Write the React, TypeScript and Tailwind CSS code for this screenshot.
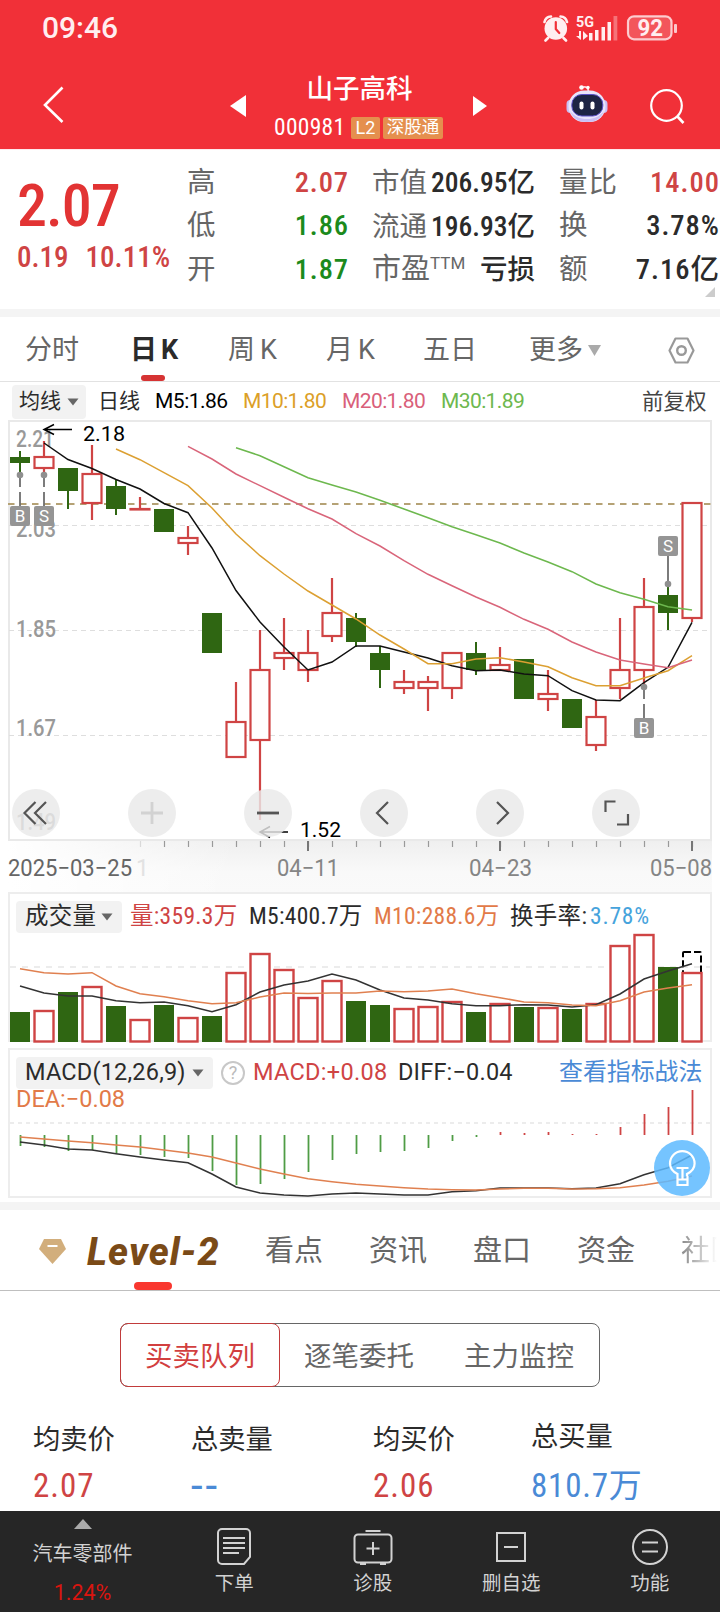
import type { ReactNode } from "react";
import clsx from "clsx";

const RED = "#cf4444";
const GREEN = "#2f6612";

// Horizontal position of the nth trading day
const cx = (i: number) => 20 + i * 24;

type Candle = { up: boolean; top: number; bottom: number; high: number; low: number };

const c = (up: boolean, top: number, bottom: number, high = top, low = bottom): Candle => ({
  up,
  top,
  bottom,
  high,
  low,
});

const candles: Candle[] = [
  c(false, 457, 463, 451, 474),
  c(true, 457, 468, 441, 474),
  c(false, 468, 491, 468, 509),
  c(true, 474, 503, 445, 520),
  c(false, 486, 509, 480, 515),
  c(true, 509, 509, 497, 509),
  c(false, 509, 532),
  c(true, 538, 543, 526, 555),
  c(false, 613, 653),
  c(true, 722, 757, 682, 757),
  c(true, 670, 740, 630, 820),
  c(true, 653, 658, 618, 670),
  c(true, 653, 670, 630, 682),
  c(true, 613, 636, 578, 642),
  c(false, 618, 642, 613, 647),
  c(false, 653, 670, 646, 688),
  c(true, 682, 688, 670, 694),
  c(true, 682, 688, 676, 711),
  c(true, 653, 688, 653, 699),
  c(false, 653, 670, 642, 675),
  c(true, 665, 670, 647, 670),
  c(false, 659, 699),
  c(true, 694, 699, 670, 711),
  c(false, 699, 728),
  c(true, 717, 745, 700, 751),
  c(true, 670, 688, 618, 699),
  c(true, 607, 670, 578, 688),
  c(false, 595, 613, 585, 630),
  c(true, 503, 618, 503, 622),
];

const ma5 = [443, 459.5, 468.5, 479.5, 489, 503.5, 512.7, 548, 590.5, 622, 647, 670, 662, 646, 646, 652, 658, 665.7, 670.7, 670, 674, 675.7, 690.7, 700, 700.7, 682.7, 667.3, 622.3];
const ma10 = [449, 459.7, 472.7, 485.7, 508, 534, 555.7, 574, 591, 605, 619, 635, 649, 663.7, 663.7, 659, 657.7, 662, 666.7, 677.7, 685.7, 685.7, 678, 670.7, 655.7];
const ma20 = [446.3, 459, 474, 485.7, 497.3, 508.7, 519, 533.7, 546, 560.7, 574.3, 585.7, 597, 607.3, 619.3, 629.3, 642, 652, 660, 664, 667.7, 660];
const ma30 = [447.7, 455.7, 466.7, 477.7, 485, 492, 500.3, 509, 517.7, 526.7, 534.7, 543, 553, 562, 571.7, 584, 592.7, 599.3, 606.7, 610];

const volumes = [1012, 1010, 992, 986, 1006, 1019, 1005, 1017, 1016, 972, 953, 969, 997, 980, 1001, 1005, 1008, 1006, 1001, 1012, 1003, 1007, 1007, 1009, 1003, 945, 934, 967, 972];
const vol5 = [986, 993, 996, 996, 1000.7, 1002.7, 1002, 1005.7, 1011.7, 1004.7, 992, 985, 981, 974, 980, 990, 998, 1000, 1003.7, 1005.7, 1005.7, 1004.7, 1005, 1007, 1004.7, 994, 979, 971, 963.7];
const vol10 = [968.7, 972.7, 974, 972.7, 986, 993.7, 996.7, 1000.7, 1003.7, 1002.7, 997, 993, 993.5, 993, 993, 991, 991.7, 991, 989, 993.7, 997.7, 1002, 1002.7, 1005, 1005.7, 1000.7, 992, 988, 984.7];

const macd = [1146, 1147, 1151, 1150, 1153, 1155, 1157, 1158, 1171, 1185, 1184, 1179, 1172, 1160, 1154, 1152, 1151, 1148, 1141, 1137, 1132, 1133, 1132, 1134, 1134, 1127, 1114, 1107, 1090];
const diff = [1142, 1145, 1149, 1150, 1153.7, 1157, 1160, 1162.7, 1174, 1187, 1193, 1195, 1196, 1194, 1193, 1194, 1195, 1195, 1191.7, 1190.7, 1188, 1188, 1188, 1188.7, 1188, 1183.7, 1174.7, 1167.7, 1155];
const dea = [1137, 1139, 1141, 1142.7, 1145, 1147, 1150, 1153, 1157, 1163, 1169, 1174, 1178.7, 1181.7, 1184.3, 1186, 1187.7, 1189, 1189.7, 1190, 1189, 1188.3, 1188.3, 1189, 1188.7, 1187.7, 1185, 1181.3, 1176];

function Line({ data, from = 0, color }: { data: number[]; from?: number; color: string }) {
  const points = data.map((y, i) => `${cx(i + from)},${y}`).join(" ");
  return <polyline points={points} fill="none" stroke={color} strokeWidth="1.500" />;
}

type LabelProps = { x: number; y: number; w: number; size?: number; fill?: string; weight?: number; children: string };

function Label({ x, y, w, size = 21, fill = "#000", weight = 400, children }: LabelProps) {
  return (
    <text x={x} y={y} fontSize={size} fontWeight={weight} fill={fill} textLength={w} lengthAdjust="spacingAndGlyphs">
      {children}
    </text>
  );
}

function Caret() {
  return (
    <svg width="12" height="8" viewBox="0 0 12 8" className="shrink-0 text-[#666]">
      <path d="M0.500 0.500h11L6 7.500z" fill="currentColor" />
    </svg>
  );
}

function Tag({ x, y, children }: { x: number; y: number; children: string }) {
  return (
    <g>
      <rect x={x - 10} y={y} width="20" height="20" rx="2" fill="#959595" />
      <text x={x} y={y + 16} fontSize="17" fill="#fff" textAnchor="middle">
        {children}
      </text>
    </g>
  );
}

function StatusBar() {
  return (
    <div className="flex h-[55px] items-center pl-[42px] pr-[41px] text-[#ffeef0]">
      <span className="text-[30px] font-medium leading-none">09:46</span>
      <svg className="ml-auto" width="136" height="28" viewBox="0 0 136 28">
        <g fill="none" stroke="currentColor" strokeWidth="2.600" strokeLinecap="round">
          <path d="M1.500 8A7 7 0 0 1 8 2.500M24 8A7 7 0 0 0 17.500 2.500M5 24l-2.500 2.500M20.500 24l2.500 2.500" />
        </g>
        <circle cx="12.800" cy="14.500" r="11.300" fill="currentColor" />
        <path d="M12.800 8v7l3.500 4" fill="none" stroke="#f13038" strokeWidth="2.200" strokeLinecap="round" />
        <text x="33" y="13" fontSize="15" fontWeight="700" fill="currentColor" textLength="18" lengthAdjust="spacingAndGlyphs">
          5G
        </text>
        <path d="M38 17v9l-5-4h3v-5zM40 17l5 5-5 4z" fill="currentColor" />
        <path d="M46 19h3.500v7.500H46zM52 16h3.500v10.500H52zM58.500 13H62v13.500h-3.500zM64.500 8H68v18.500h-3.500z" fill="currentColor" />
        <path d="M70.500 2h3.800v24.500h-3.800z" fill="currentColor" opacity=".35" />
        <rect x="85" y="2.300" width="43.500" height="23" rx="6" fill="#fff" fillOpacity=".18" stroke="currentColor" strokeWidth="2.200" strokeOpacity=".8" />
        <rect x="131" y="10" width="3" height="9" rx="1" fill="currentColor" opacity=".8" />
        <text x="94.500" y="22" fontSize="23" fontWeight="700" fill="currentColor" textLength="25.500" lengthAdjust="spacingAndGlyphs">
          92
        </text>
      </svg>
    </div>
  );
}

function Robot() {
  return (
    <svg width="42" height="40" viewBox="0 0 42 40">
      <path d="M16 3.500c4-1.500 6.500 0 6.500 5" fill="none" stroke="#ffd5dc" strokeWidth="1.800" />
      <circle cx="15.500" cy="3.500" r="2.300" fill="#fff" />
      <circle cx="22" cy="3.500" r="1.700" fill="#fff" />
      <rect x="0.500" y="16" width="8" height="13" rx="4" fill="#c9c0f5" />
      <rect x="33.500" y="16" width="8" height="13" rx="4" fill="#c9c0f5" />
      <rect x="2.500" y="6.500" width="37" height="31.500" rx="15.500" fill="#e9e4fb" />
      <path d="M4 27c3 8 9 11 17 11s14-3 17-11c-5 6-10 8-17 8S9 33 4 27z" fill="#c9c0f5" />
      <rect x="5.800" y="10.500" width="31" height="21.500" rx="10" fill="#1d2444" stroke="#5a50c8" />
      <rect x="13.500" y="17.500" width="4" height="8" rx="2" fill="#fff" />
      <rect x="24.500" y="17.500" width="4" height="8" rx="2" fill="#fff" />
    </svg>
  );
}

function Header() {
  return (
    <header className="h-[149px] bg-[#f13038] text-white">
      <StatusBar />
      <div className="flex h-[94px] items-center">
        <svg className="ml-[42px] mt-[2px]" width="24" height="40" viewBox="0 0 24 40">
          <path d="M20.500 4.500L3 22l17.500 17" fill="none" stroke="#fff" strokeWidth="2.600" />
        </svg>
        <svg className="ml-[164px] mt-2" width="17" height="22" viewBox="0 0 17 22">
          <path d="M16 0v22L0 11z" fill="#fff" />
        </svg>
        <div className="ml-[26px] flex w-[173px] flex-col items-center pt-[9px]">
          <h1 className="text-[26.500px] font-medium leading-[32px]">山子高科</h1>
          <div className="mt-[11px] flex h-[24px] w-full items-center gap-[3px]">
            <span className="w-[75px] pl-px text-[23.500px] font-stretch-75% leading-none tracking-[0.300px]">000981</span>
            <span className="flex h-[22px] w-[29px] items-center justify-center rounded-[2px] bg-[#e58f4e] text-[18px] leading-none">L2</span>
            <span className="flex h-[22px] w-[60px] items-center justify-center rounded-[2px] bg-[#e58f4e] text-[17.500px] leading-none">深股通</span>
          </div>
        </div>
        <svg className="ml-[27px] mt-2" width="14" height="20" viewBox="0 0 14 20">
          <path d="M0 0v20l14-10z" fill="#fff" />
        </svg>
        <div className="ml-[79px] mt-[4px]">
          <Robot />
        </div>
        <svg className="ml-[42px] mt-[9px]" width="35" height="35" viewBox="0 0 35 35">
          <circle cx="16.500" cy="16.500" r="15.300" fill="none" stroke="#fff" strokeWidth="2.200" />
          <path d="M27 27l6.500 7" stroke="#fff" strokeWidth="2.600" />
        </svg>
      </div>
    </header>
  );
}

function Stat({ label, value, tone = "text-[#2b2b2b]" }: { label: ReactNode; value: string; tone?: string }) {
  return (
    <div className="flex h-[43.500px] items-center justify-between whitespace-nowrap">
      <span className="leading-none text-[#666]">{label}</span>
      <span className={clsx("font-medium leading-none", tone)}>{value}</span>
    </div>
  );
}

function Quote() {
  return (
    <section className="relative flex h-[160px] items-start border-t border-[#ffe9ec] pt-[11px] font-stretch-75%">
      <div className="w-[187px] pl-[17px] pt-[14px]">
        <div className="text-[60px] font-medium leading-[62px] tracking-[-1px] text-[#e23333]">2.07</div>
        <div className="mt-[4px] flex gap-[17px] text-[29px] font-medium leading-[32px] text-[#cf4444]">
          <span>0.19</span>
          <span>10.11%</span>
        </div>
      </div>
      <div className="w-[162px] text-[28.500px] tracking-[0.900px]">
        <Stat label="高" value="2.07" tone="text-[#cf4444]" />
        <Stat label="低" value="1.86" tone="text-[#1c8a1c]" />
        <Stat label="开" value="1.87" tone="text-[#1c8a1c]" />
      </div>
      <div className="ml-[23px] w-[163px] text-[27.500px]">
        <Stat label="市值" value="206.95亿" />
        <Stat label="流通" value="196.93亿" />
        <Stat
          label={
            <span className="text-[29px]">
              市盈<sup className="top-[-10px] text-[17px] font-stretch-100%">TTM</sup>
            </span>
          }
          value="亏损"
        />
      </div>
      <div className="ml-[24px] w-[161px] text-[28.500px] tracking-[1px]">
        <Stat label="量比" value="14.00" tone="text-[#cf4444]" />
        <Stat label="换" value="3.78%" />
        <Stat label="额" value="7.16亿" />
      </div>
      <svg className="absolute bottom-[12px] right-[5px]" width="10" height="10" viewBox="0 0 10 10">
        <path d="M10 0v10H0z" fill="#ccc" />
      </svg>
    </section>
  );
}

function PeriodTabs() {
  return (
    <nav className="flex h-[65px] items-center border-b border-[#e2e2e2] pl-[25px] pt-[3px] text-[27px] text-[#666]">
      <span className="w-[105px]">分时</span>
      <span className="relative flex h-full w-[98px] items-center gap-[4px] font-bold text-[#2b2b2b]">
        日<span>K</span>
        <i className="absolute bottom-0 left-[11px] h-[6px] w-[24px] rounded-full bg-[#d63333]" />
      </span>
      <span className="flex w-[98px] gap-[5px]">
        周<span>K</span>
      </span>
      <span className="flex w-[97px] gap-[5px]">
        月<span>K</span>
      </span>
      <span className="w-[106px]">五日</span>
      <span className="flex w-[139px] items-center gap-[5px]">
        更多
        <svg width="13" height="11" viewBox="0 0 13 11">
          <path d="M0 0h13L6.500 11z" fill="#aaa" />
        </svg>
      </span>
      <svg width="27" height="27" viewBox="0 0 27 27">
        <path d="M7.500 1.500h12l6 12-6 12h-12l-6-12z" fill="none" stroke="#999" strokeWidth="2.200" strokeLinejoin="round" />
        <circle cx="13.500" cy="13.500" r="4.300" fill="none" stroke="#999" strokeWidth="2.400" />
      </svg>
    </nav>
  );
}

function Legend() {
  return (
    <div className="flex h-[38px] items-center whitespace-nowrap pt-px text-[21px] leading-none">
      <span className="ml-[12px] flex h-[34px] w-[74px] items-center gap-[6px] rounded-[4px] bg-[#f2f2f2] pl-[7px] text-[#2b2b2b]">
        均线
        <Caret />
      </span>
      <span className="ml-[12px] w-[57px] text-[#2b2b2b]">日线</span>
      <span className="w-[88px] tracking-[-0.500px] text-black">M5:1.86</span>
      <span className="w-[99px] tracking-[-0.600px] text-[#dc9f28]">M10:1.80</span>
      <span className="w-[99px] tracking-[-0.600px] text-[#d9607a]">M20:1.80</span>
      <span className="w-[201px] tracking-[-0.600px] text-[#6db84e]">M30:1.89</span>
      <span className="text-[21.500px] text-[#444]">前复权</span>
    </div>
  );
}

function KChart() {
  return (
    <svg width="720" height="472" viewBox="0 420 720 472" className="block">
      <defs>
        <linearGradient id="axis" x1="0" y1="0" x2="0" y2="1">
          <stop offset="0" stopColor="#efefef" />
          <stop offset=".6" stopColor="#f9f9f9" />
          <stop offset="1" stopColor="#fafafa" />
        </linearGradient>
        <linearGradient id="fade" x1="0" y1="0" x2="1" y2="0">
          <stop offset="0" stopColor="#fff" />
          <stop offset="1" stopColor="#fff" stopOpacity="0" />
        </linearGradient>
      </defs>
      <rect x="8" y="841" width="704" height="51" fill="url(#axis)" />
      <rect x="8" y="841" width="230" height="51" fill="url(#fade)" />
      <rect x="9" y="421" width="702" height="419" fill="none" stroke="#e9e9e9" strokeWidth="2" />
      <g stroke="#dedede" strokeWidth="1.200" strokeDasharray="5 4">
        <path d="M9 525.500H711M9 630.500H711M9 735.500H711" />
      </g>
      <path d="M8 504H711" stroke="#b5a275" strokeWidth="1.800" strokeDasharray="6.500 5.500" />

      <Label x={16} y={447} w={38} size={23} weight={500} fill="#999">2.21</Label>
      <Label x={16} y={537} w={40} size={23} weight={500} fill="#999">2.03</Label>
      <Label x={16} y={637} w={40} size={23} weight={500} fill="#999">1.85</Label>
      <Label x={16} y={736} w={40} size={23} weight={500} fill="#999">1.67</Label>
      <Label x={16} y={830} w={40} size={23} weight={500} fill="#999">1.49</Label>

      {candles.map(({ up, top, bottom, high, low }, i) =>
        up ? (
          <g key={i} stroke={RED} strokeWidth="2.200">
            <path d={`M${cx(i)} ${high}V${top}M${cx(i)} ${bottom}V${low}`} />
            <rect x={cx(i) - 9.5} y={top} width="19" height={Math.max(bottom - top, 0.5)} fill="#fff" />
          </g>
        ) : (
          <g key={i} fill={GREEN}>
            <rect x={cx(i) - 1} y={high} width="2" height={low - high} />
            <rect x={cx(i) - 10} y={top} width="20" height={bottom - top} />
          </g>
        )
      )}

      <Line data={ma5} from={1} color="#111" />
      <Line data={ma10} from={4} color="#dca032" />
      <Line data={ma20} from={7} color="#d9657a" />
      <Line data={ma30} from={9} color="#6db84e" />

      {/* trade markers */}
      <g stroke="#6e6e6e" strokeWidth="1.800">
        <path d="M20 475v12M20 492v14M44 475v12M44 492v14M668 556v28M644 689v10M644 704v14" />
      </g>
      <g fill="#8f8f8f">
        <circle cx="20" cy="475" r="3.300" />
        <circle cx="44" cy="475" r="3.300" />
        <circle cx="668" cy="584" r="3.300" />
        <circle cx="644" cy="687" r="3.300" />
      </g>
      <Tag x={20} y={506}>B</Tag>
      <Tag x={44} y={506}>S</Tag>
      <Tag x={668} y={536}>S</Tag>
      <Tag x={644} y={718}>B</Tag>

      <path d="M72 429.500H45M54 424.500l-10 5 10 5" fill="none" stroke="#000" strokeWidth="1.500" />
      <Label x={83} y={441} w={42}>2.18</Label>
      <path d="M288 832H261M270 826.500l-10 5.500 10 5.500" fill="none" stroke="#000" strokeWidth="1.500" />
      <Label x={300} y={837} w={41}>1.52</Label>

      {/* floating chart controls */}
      <g fill="#e9e9e9" fillOpacity=".82">
        {[36, 152, 268, 384, 500, 616].map((x) => (
          <circle key={x} cx={x} cy="813" r="24" />
        ))}
      </g>
      <g fill="none" stroke="#555" strokeWidth="2.200">
        <path d="M35.500 802l-11 11 11 11M46 802l-11 11 11 11" />
        <path d="M152 802v22M141 813h22" stroke="#d2d2d2" strokeWidth="2.800" />
        <path d="M257 813h22" strokeWidth="2.800" />
        <path d="M388 802l-11 11 11 11M497 802l11 11-11 11" />
        <path d="M605.500 812v-10.500h10M628 814v10.500h-11" />
      </g>

      {/* date axis */}
      <g stroke="#999" strokeWidth="1.200">
        {candles.map((_, i) => (i > 4 ? <path key={i} d={`M${cx(i) + 0.5} 841v6`} opacity={i === 5 ? 0.3 : 1} /> : null))}
      </g>
      <path d="M308 841v10M500 841v10M692 841v10" stroke="#777" strokeWidth="2" />
      <Label x={8} y={876} w={124} size={23.5} fill="#666">2025−03−25</Label>
      <text x="136" y="876" fontSize="23" fill="#e2e2e2">1</text>
      <Label x={277} y={876} w={62} size={23.5} fill="#858585">04−11</Label>
      <Label x={469} y={876} w={63} size={23.5} fill="#858585">04−23</Label>
      <Label x={650} y={876} w={62} size={23.5} fill="#858585">05−08</Label>
    </svg>
  );
}

function Volume() {
  return (
    <section className="mx-2 h-[150px] border-x-2 border-t-2 border-[#ededed]">
      <div className="flex h-[45px] items-center whitespace-nowrap pl-[6px] pt-px text-[23.500px] leading-none tracking-[0.300px] font-stretch-75%">
        <span className="flex h-[32px] w-[106px] items-center gap-[5px] rounded-[4px] bg-[#f2f2f2] pl-[9px] text-[#2b2b2b]">
          成交量
          <Caret />
        </span>
        <span className="ml-[8px] w-[119px] text-[#cf4444]">量:359.3万</span>
        <span className="w-[125px] text-[#2b2b2b]">M5:400.7万</span>
        <span className="w-[136px] text-[#e27a48]">M10:288.6万</span>
        <span className="w-[80px] text-[#2b2b2b]">换手率:</span>
        <span className="tracking-[0.800px] text-[#46a3dc]">3.78%</span>
      </div>
      <svg width="700" height="103" viewBox="10 939 700 103" className="block overflow-visible">
        <path d="M10 967H710" stroke="#e6e6e6" strokeWidth="1.500" strokeDasharray="6 6" />
        <path d="M8 1041H712" stroke="#ededed" strokeWidth="2" />
        <rect x="683" y="952" width="18" height="26" rx="1" fill="none" stroke="#000" strokeWidth="2" strokeDasharray="7 3" />
        {volumes.map((y, i) =>
          candles[i].up ? (
            <rect key={i} x={cx(i) - 9.5} y={y + 1} width="19" height={1040.5 - y} fill="#fff" stroke={RED} strokeWidth="2.400" />
          ) : (
            <rect key={i} x={cx(i) - 10} y={y} width="20" height={1042 - y} fill={GREEN} />
          )
        )}
        <Line data={vol5} color="#333" />
        <Line data={vol10} color="#e08050" />
      </svg>
    </section>
  );
}

function Macd() {
  return (
    <section className="relative mx-2 mt-[6px] h-[150px] border-2 border-[#ededed]">
      <div className="flex h-[44px] items-center whitespace-nowrap pl-[6px] pt-[2px] text-[23.500px] leading-none">
        <span className="flex h-[32px] w-[197px] items-center rounded-[4px] bg-[#f2f2f2] pl-[9px] text-[#2b2b2b]">
          <span className="w-[167px] tracking-[0.200px]">MACD(12,26,9)</span>
          <Caret />
        </span>
        <span className="ml-[8px] flex size-[24px] items-center justify-center rounded-full border-2 border-[#c8c8c8] text-[18px] text-[#bbb]">?</span>
        <span className="ml-[8px] w-[145px] tracking-[0.300px] text-[#cf4444]">MACD:+0.08</span>
        <span className="w-[161px] tracking-[0.200px] text-[#2b2b2b]">DIFF:−0.04</span>
        <span className="text-[23.900px] text-[#4a8ad6]">查看指标战法</span>
      </div>
      <div className="h-[10px] pl-[6px] text-[23.500px] leading-[10px] text-[#e27a48]">DEA:−0.08</div>
      <svg width="700" height="92" viewBox="10 1104 700 92" className="block overflow-visible">
        <path d="M10 1123H710" stroke="#e6e6e6" strokeWidth="1.500" strokeDasharray="4 4" />
        {macd.map((y, i) => (
          <path key={i} d={`M${cx(i) + 0.5} 1135V${y}`} stroke={y > 1135 ? "#4f9c45" : RED} strokeWidth="1.800" />
        ))}
        <Line data={diff} color="#333" />
        <Line data={dea} color="#e08050" />
      </svg>
      <button className="absolute bottom-0 right-0 size-[56px] rounded-full bg-[#5dbaff]/85" aria-label="提示">
        <svg width="56" height="56" viewBox="0 0 56 56" fill="none" stroke="#fff" strokeWidth="2.200">
          <path d="M23.500 36v-2c-5-2.500-7.500-6-7.500-10.500a12.300 12.300 0 0 1 24.600 0c0 4.500-2.600 8-7.600 10.500v2" />
          <path d="M22.500 28h12M28.500 28v11M23.500 36v9h10v-9M23.500 39.500h10" />
        </svg>
      </button>
    </section>
  );
}

function DetailTabs() {
  return (
    <nav className="relative flex h-[81px] items-center overflow-hidden whitespace-nowrap border-b border-[#bfbfbf] pt-[3px] text-[29px] text-[#666]">
      <svg className="ml-[39px] shrink-0" width="27" height="25" viewBox="0 0 27 25">
        <path d="M5 0h17l5 10-13.500 15L0 10z" fill="#d2ae7c" />
        <path d="M8.500 7h10" stroke="#fff" strokeWidth="2" />
      </svg>
      <span className="ml-[21px] w-[178px] shrink-0 text-[38px] font-extrabold italic leading-none tracking-[1.100px] text-[#7a4a17]">Level-2</span>
      <span className="w-[104px] shrink-0">看点</span>
      <span className="w-[104px] shrink-0">资讯</span>
      <span className="w-[104px] shrink-0">盘口</span>
      <span className="w-[104px] shrink-0">资金</span>
      <span className="shrink-0 bg-gradient-to-r from-[#888] to-white to-[36px] bg-clip-text text-transparent">社区</span>
      <i className="absolute bottom-0 left-[134px] h-[8px] w-[38px] rounded-[4px] bg-[#f9372f]" />
    </nav>
  );
}

function QueueSwitch() {
  return (
    <div className="mx-auto mt-[32px] flex h-[64px] w-[480px] rounded-[8px] border border-[#666] text-[27.500px] text-[#666]">
      <span className="-m-px flex w-[160px] items-center justify-center rounded-[8px] border border-[#c23b3b] pt-[3px] text-[#d23f3f]">买卖队列</span>
      <span className="flex w-[160px] items-center justify-center pt-[3px]">逐笔委托</span>
      <span className="flex w-[160px] items-center justify-center pt-[3px]">主力监控</span>
    </div>
  );
}

function Totals() {
  const items = [
    { label: "均卖价", value: "2.07", width: "w-[158px]", tone: "text-[#cf4444] text-[33px] tracking-[1px]" },
    { label: "总卖量", value: "--", width: "w-[182px]", tone: "text-[#4a8ad6] text-[42px] tracking-[3px] font-stretch-100%" },
    { label: "均买价", value: "2.06", width: "w-[158px]", tone: "text-[#cf4444] text-[33px] tracking-[1px]" },
    { label: "总买量", value: "810.7万", width: "-mt-[3px] w-[160px]", tone: "text-[#4a8ad6] text-[33px] tracking-[0.800px] pt-[3px]" },
  ];
  return (
    <div className="flex h-[124px] pl-[33px] pt-[37px] font-stretch-75%">
      {items.map(({ label, value, width, tone }) => (
        <div key={label} className={width}>
          <div className="text-[27.300px] leading-[32px] text-[#2b2b2b]">{label}</div>
          <div className={clsx("mt-[12px] leading-[36px]", tone)}>{value}</div>
        </div>
      ))}
    </div>
  );
}

function NavItem({ label, children }: { label: string; children: ReactNode }) {
  return (
    <div className="flex w-[138.500px] shrink-0 flex-col items-center pt-[14px]">
      <svg width="44" height="44" viewBox="0 0 44 44" fill="none" stroke="#d2d2d2" strokeWidth="2">
        {children}
      </svg>
      <span className="mt-[5px] text-[19.500px] leading-[20px]">{label}</span>
    </div>
  );
}

function BottomNav() {
  return (
    <footer className="flex h-[101px] bg-[#262626] text-[#d2d2d2]">
      <div className="flex w-[165px] shrink-0 flex-col items-center pt-[8px]">
        <svg width="18" height="10" viewBox="0 0 18 10">
          <path d="M9 0l9 10H0z" fill="#aaa" />
        </svg>
        <span className="mt-[15px] text-[20px] leading-[20px]">汽车零部件</span>
        <span className="mt-[19px] text-[21.500px] leading-[20px] text-[#d9150f]">1.24%</span>
      </div>
      <NavItem label="下单">
        <path d="M10 4h24a4 4 0 0 1 4 4v24l-6 7H10a4 4 0 0 1-4-4V8a4 4 0 0 1 4-4z" />
        <path d="M11 13h22M11 18h22M11 23h22M11 28h16" strokeWidth="1.800" />
      </NavItem>
      <NavItem label="诊股">
        <path d="M14.500 6h15" />
        <rect x="3.500" y="9.500" width="37" height="28" rx="3.500" />
        <path d="M22 17v13M15.500 23.500h13" />
        <path d="M9 38.500h6M29 38.500h6" strokeWidth="3" />
      </NavItem>
      <NavItem label="删自选">
        <rect x="8" y="8" width="28" height="28" />
        <path d="M15 22h14" />
      </NavItem>
      <NavItem label="功能">
        <circle cx="22" cy="22" r="17" />
        <path d="M14 17.500h16M14 26.500h16" />
      </NavItem>
    </footer>
  );
}

export default function App() {
  return (
    <main className="h-[1612px] w-[720px] overflow-hidden bg-white font-['Roboto','Noto_Sans_CJK_SC',sans-serif]">
      <Header />
      <Quote />
      <div className="h-2 bg-[#f4f4f4]" />
      <PeriodTabs />
      <Legend />
      <KChart />
      <Volume />
      <Macd />
      <div className="mt-[4px] h-2 bg-[#f4f4f4]" />
      <DetailTabs />
      <QueueSwitch />
      <Totals />
      <BottomNav />
    </main>
  );
}
